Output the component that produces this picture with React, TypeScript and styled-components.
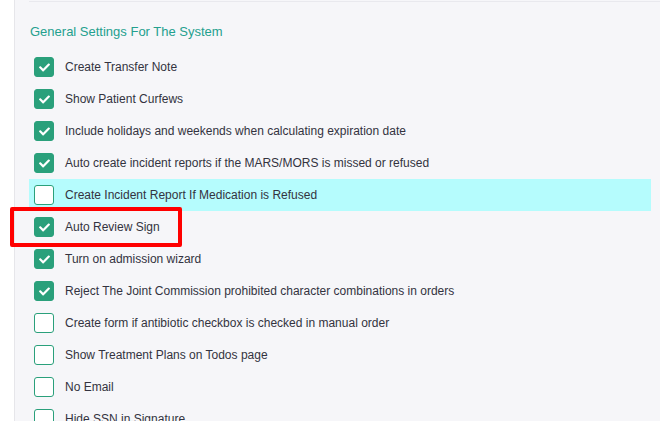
import React from 'react';
import styled, { createGlobalStyle } from 'styled-components';
import { FaCheck } from 'react-icons/fa';

const GlobalStyle = createGlobalStyle`
  html, body {
    margin: 0;
    padding: 0;
    background: #ffffff;
    font-family: 'Liberation Sans', Arial, sans-serif;
  }
`;

const Page = styled.div`
  display: flex;
  width: 660px;
  height: 421px;
  overflow: hidden;
  background: #ffffff;
`;

const Gutter = styled.div`
  width: 14px;
  flex-shrink: 0;
  border-right: 1px solid #e6e6ea;
`;

const Panel = styled.div`
  flex: 1;
  background: #f6f6f9;
  padding: 0 9px 0 14px;
  box-sizing: border-box;
`;

const TopRule = styled.div`
  height: 1px;
  margin-top: 1px;
  margin-right: -9px;
  background: #e9e9ee;
`;

const Title = styled.h3`
  margin: 0;
  padding: 21px 0 0 1px;
  height: 28px;
  box-sizing: content-box;
  font-size: 13px;
  font-weight: 400;
  line-height: 18px;
  color: #24a08e;
`;

const List = styled.div`
  display: flex;
  flex-direction: column;
`;

const Row = styled.label<{ $highlight?: boolean }>`
  position: relative;
  display: flex;
  align-items: center;
  gap: 11px;
  height: 32px;
  padding-left: 5px;
  background: ${(p) => (p.$highlight ? '#b5fcfd' : 'transparent')};
  cursor: pointer;
`;

const Box = styled.span<{ $checked: boolean }>`
  display: inline-flex;
  align-items: center;
  justify-content: center;
  width: 20px;
  height: 20px;
  box-sizing: border-box;
  border-radius: 3px;
  border: 1px solid #2aa07b;
  background: ${(p) => (p.$checked ? '#2aa07b' : '#ffffff')};
  color: #ffffff;
`;

const Label = styled.span`
  font-size: 12px;
  color: #333340;
  white-space: nowrap;
`;

const Callout = styled.div`
  position: absolute;
  left: -19px;
  top: -4px;
  width: 172px;
  height: 40px;
  box-sizing: border-box;
  border: 4px solid #ff0000;
  border-radius: 2px;
  pointer-events: none;
`;

const settings = [
  { label: 'Create Transfer Note', checked: true },
  { label: 'Show Patient Curfews', checked: true },
  { label: 'Include holidays and weekends when calculating expiration date', checked: true },
  { label: 'Auto create incident reports if the MARS/MORS is missed or refused', checked: true },
  { label: 'Create Incident Report If Medication is Refused', checked: false, highlight: true },
  { label: 'Auto Review Sign', checked: true, callout: true },
  { label: 'Turn on admission wizard', checked: true },
  { label: 'Reject The Joint Commission prohibited character combinations in orders', checked: true },
  { label: 'Create form if antibiotic checkbox is checked in manual order', checked: false },
  { label: 'Show Treatment Plans on Todos page', checked: false },
  { label: 'No Email', checked: false },
  { label: 'Hide SSN in Signature', checked: false },
];

const App = () => {
  return (
    <>
      <GlobalStyle />
      <Page>
        <Gutter />
        <Panel>
          <TopRule />
          <Title>General Settings For The System</Title>
          <List>
            {settings.map((s) => (
              <Row key={s.label} $highlight={s.highlight}>
                <Box $checked={s.checked}>{s.checked && <FaCheck size={11} />}</Box>
                <Label>{s.label}</Label>
                {s.callout && <Callout />}
              </Row>
            ))}
          </List>
        </Panel>
      </Page>
    </>
  );
};

export default App;
